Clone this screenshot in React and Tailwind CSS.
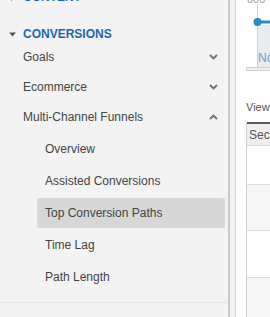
import React from "react";

const Chevron = ({ up }) => (
  <svg width="9" height="6" viewBox="0 0 9 6" className="text-[#6f6f6f]">
    <polyline
      points={up ? "1,5 4.5,1.5 8,5" : "1,1 4.5,4.5 8,1"}
      fill="none"
      stroke="currentColor"
      strokeWidth="1.8"
    />
  </svg>
);

const Triangle = ({ right }) => (
  <svg width="7" height="7" viewBox="0 0 7 7" className="text-[#555]">
    <polygon points={right ? "2,0 6,3.5 2,7" : "0,1.5 7,1.5 3.5,5.5"} fill="currentColor" />
  </svg>
);

const topItems = [
  { label: "Goals" },
  { label: "Ecommerce" },
  { label: "Multi-Channel Funnels", open: true },
];

const subItems = [
  "Overview",
  "Assisted Conversions",
  "Top Conversion Paths",
  "Time Lag",
  "Path Length",
];

export default function App() {
  return (
    <div
      className="flex h-[317px] w-[270px] overflow-hidden bg-white"
      style={{ fontFamily: '"Liberation Sans", Arial, sans-serif' }}
    >
      {/* Sidebar */}
      <div className="w-[228px] shrink-0 bg-[#f3f3f3] text-[12px] text-[#444]">
        <div className="-mt-[11px]">
          <div className="flex h-[16px] items-center">
            <span className="flex w-[23px] justify-center pl-[1px]">
              <Triangle right />
            </span>
            <span className="font-bold text-[#1a69b0]">CONTENT</span>
          </div>
          <div className="mt-[21px] flex h-[16px] items-center">
            <span className="flex w-[23px] justify-center pl-[1px]">
              <Triangle />
            </span>
            <span className="font-bold text-[#1a69b0]">CONVERSIONS</span>
          </div>
          {topItems.map((item) => (
            <div
              key={item.label}
              className="flex h-[30px] items-center justify-between pl-[23px] pr-[10px]"
            >
              <span>{item.label}</span>
              <Chevron up={item.open} />
            </div>
          ))}
          <div className="pt-px">
            {subItems.map((label) => (
              <div key={label} className="h-[32px] py-px pl-[37px] pr-[3px]">
                <div
                  className={
                    "flex h-[30px] items-center rounded-[2px] pl-[8px] " +
                    (label === "Top Conversion Paths" ? "bg-[#d7d7d7]" : "")
                  }
                >
                  {label}
                </div>
              </div>
            ))}
          </div>
          <div className="mt-[9px] border-t border-[#e6e6e6]" />
        </div>
      </div>

      {/* Divider / scroll strip */}
      <div className="w-[2px] shrink-0 bg-[#c9c9c9]" />
      <div className="w-[5px] shrink-0 bg-[#f2f2f2]" />
      <div className="w-px shrink-0 bg-[#d6d6d6]" />

      {/* Main content */}
      <div className="flex-1 pl-[10px] text-[#555]">
        <div className="relative h-[72px]">
          <svg width="30" height="72" className="absolute left-0 top-0">
            <text x="1" y="3" fontSize="11" fill="#999">000</text>
            <rect x="12" y="25" width="20" height="42" fill="#e8ecf1" />
            <line x1="11.5" y1="4" x2="11.5" y2="67" stroke="#cfcfcf" strokeWidth="1" />
            <line x1="12" y1="22" x2="30" y2="22" stroke="#2b8ac6" strokeWidth="3" />
            <circle cx="11.5" cy="22" r="4" fill="#2b8ac6" />
            <text x="12" y="62" fontSize="12" fill="#6a9fca">No</text>
            <rect x="0.5" y="67.5" width="30" height="3" fill="#f1f1f1" stroke="#cfcfcf" strokeWidth="1" />
          </svg>
        </div>
        <div className="mt-[29px] h-[13px] text-[11px] leading-[13px]">View</div>
        <div className="mt-[8px] border-l border-[#cfcfcf]">
          <div className="flex h-[24px] items-center border-t-2 border-[#5c5c5c] border-b border-b-[#d6d6d6] bg-[#efefef] pl-[2px] text-[12px]">
            Section
          </div>
          <div className="h-[39px] border-b border-[#dcdcdc] bg-white" />
          <div className="h-[46px] border-b border-[#dcdcdc] bg-[#f6f6f6]" />
          <div className="h-[47px] border-b border-[#dcdcdc] bg-white" />
          <div className="h-[40px] bg-[#f6f6f6]" />
        </div>
      </div>
    </div>
  );
}
